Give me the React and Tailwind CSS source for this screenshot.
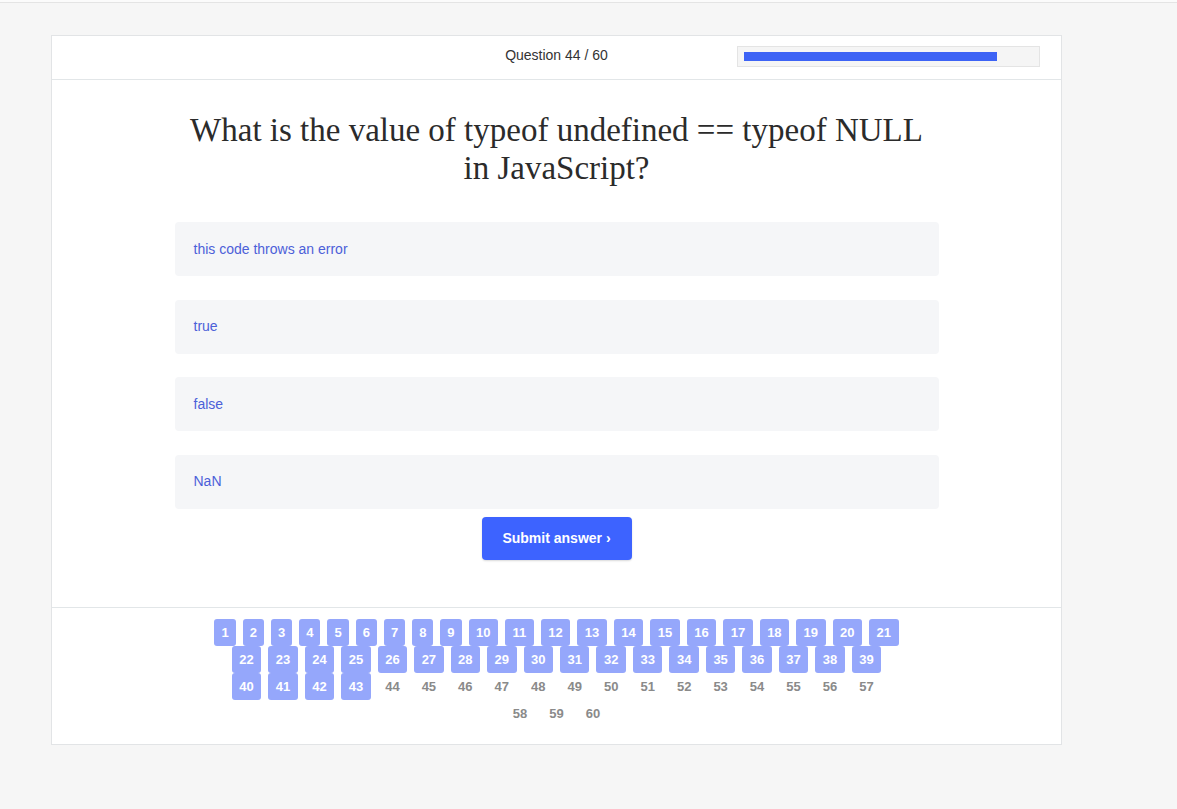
import React from "react";

const rows = [
  Array.from({ length: 21 }, (_, i) => i + 1),
  Array.from({ length: 18 }, (_, i) => i + 22),
  Array.from({ length: 18 }, (_, i) => i + 40),
  [58, 59, 60],
];

const options = ["this code throws an error", "true", "false", "NaN"];

export default function App() {
  return (
    <div
      className="min-h-[809px] bg-[#f6f6f6]"
      style={{ fontFamily: '"Liberation Sans", Arial, sans-serif' }}
    >
      <div className="h-[3px] bg-[#fbfbfb] border-b border-[#e4e4e4]" />
      <div className="ml-[51px] mt-[32px] w-[1011px] h-[710px] bg-white border border-[#e2e4e6] flex flex-col">
        {/* header */}
        <div className="h-[44px] border-b border-[#e2e6e8] grid grid-cols-[1fr_auto_1fr] items-center">
          <div />
          <div className="text-[14px] text-[#333] mb-[5px]">Question 44 / 60</div>
          <div className="flex justify-end pr-[21px]">
            <div className="w-[303px] h-[21px] bg-[#f5f5f5] border border-[#e4e4e4] px-[6px] py-[5px] mb-[3px]">
              <div className="w-[253px] h-[9px] bg-[#3d63f5]" />
            </div>
          </div>
        </div>

        {/* question */}
        <h1
          className="mt-[31px] text-center text-[33px] leading-[38px] text-[#2b2b2b] font-normal"
          style={{ fontFamily: '"Liberation Serif", Georgia, serif' }}
        >
          What is the value of typeof undefined == typeof NULL
          <br />
          in JavaScript?
        </h1>

        <div className="mt-[35px] mx-auto w-[764px] flex flex-col gap-[23.5px]">
          {options.map((o) => (
            <div
              key={o}
              className="h-[54px] rounded-[4px] bg-[#f5f6f8] flex items-center pl-[19px] text-[14px] text-[#4c60d8]"
            >
              {o}
            </div>
          ))}
        </div>

        <div className="flex justify-center mt-[8px]">
          <button className="w-[150px] h-[43px] rounded-[4px] bg-[#3d63ff] text-white text-[14px] font-bold shadow-[0_1px_2px_rgba(0,0,0,0.15)]">
            Submit answer ›
          </button>
        </div>

        <div className="mt-[47px] border-t border-[#e2e6e8] pt-[11px] flex flex-col items-center">
          {rows.map((row, ri) => (
            <div key={ri} className="flex justify-center gap-x-[7px]">
              {row.map((n) => (
                <div
                  key={n}
                  className={
                    (n < 44 ? "rounded-[3px] bg-[#95a7fb] text-white " : "text-[#8a8a8a] ") +
                    (n < 10 ? "px-[7px] " : "px-[7.5px] ") +
                    "h-[27px] text-[13px] font-bold leading-[27px]"
                  }
                >
                  {n}
                </div>
              ))}
            </div>
          ))}
        </div>
      </div>
    </div>
  );
}
